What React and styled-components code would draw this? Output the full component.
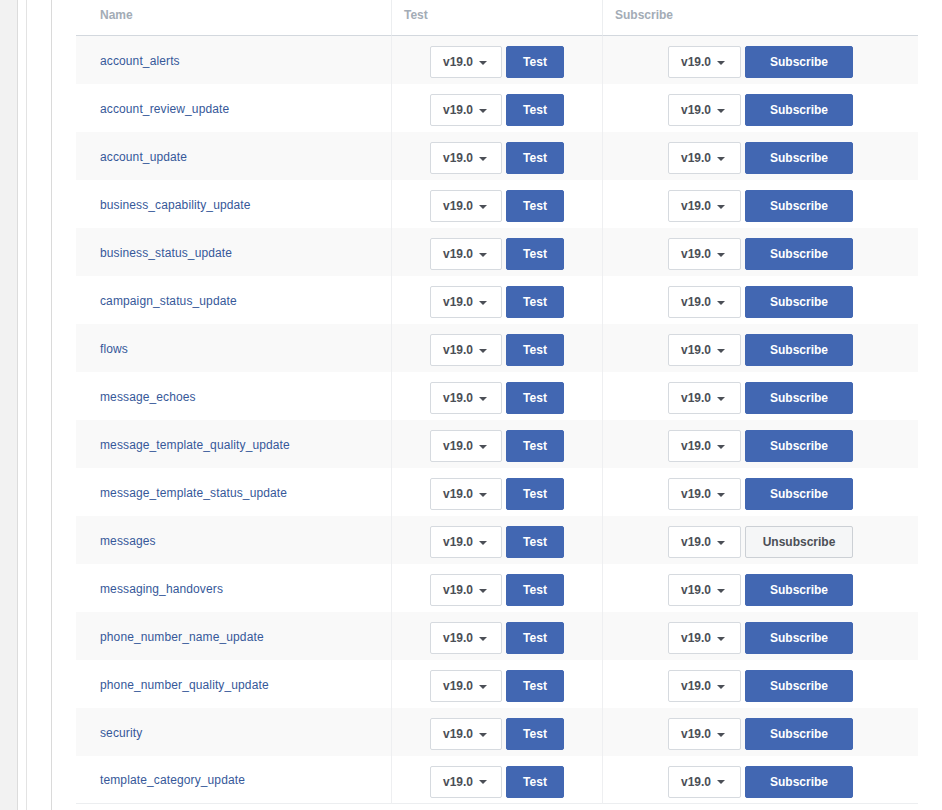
import React from 'react'
import styled, { createGlobalStyle } from 'styled-components'

const Global = createGlobalStyle`
  html, body {
    margin: 0;
    padding: 0;
    background: #fff;
    font-family: "Liberation Sans", Arial, Helvetica, sans-serif;
  }
`

const fields = [
  'account_alerts',
  'account_review_update',
  'account_update',
  'business_capability_update',
  'business_status_update',
  'campaign_status_update',
  'flows',
  'message_echoes',
  'message_template_quality_update',
  'message_template_status_update',
  'messages',
  'messaging_handovers',
  'phone_number_name_update',
  'phone_number_quality_update',
  'security',
  'template_category_update',
]

const subscribed = ['messages']

const Page = styled.div`
  display: flex;
  min-height: 810px;
`

const Sidebar = styled.div`
  width: 17px;
  flex: none;
  background: #f2f2f2;
  border-right: 1px solid #dcdcdc;
`

const Outer = styled.div`
  flex: 1;
  padding-left: 8px;
  display: flex;
`

const Inner = styled.div`
  flex: 1;
  border-left: 1px solid #e3e3e3;
  padding-left: 24px;
  display: flex;
`

const Content = styled.div`
  flex: 1;
  border-left: 1px solid #dadada;
  padding: 0 24px 0 24px;
`

const Table = styled.div`
  display: grid;
  grid-template-columns: 315px 211px 316px;
`

const HeadCell = styled.div`
  height: 36px;
  border-bottom: 1px solid #d3d8de;
  border-left: ${p => (p.$first ? 'none' : '1px solid #eceef0')};
  font-size: 12px;
  font-weight: bold;
  color: #a3acb6;
  padding-left: ${p => (p.$first ? '24px' : '12px')};
  display: flex;
  align-items: center;
  padding-bottom: 5px;
  box-sizing: border-box;
`

const Cell = styled.div`
  height: 48px;
  box-sizing: border-box;
  background: ${p => (p.$odd ? '#f9f9f9' : '#fff')};
  border-left: ${p => (p.$first ? 'none' : '1px solid #eeeff1')};
  border-bottom: ${p => (p.$last ? '1px solid #eceef0' : 'none')};
  display: flex;
  align-items: center;
  justify-content: ${p => (p.$first ? 'flex-start' : 'center')};
  padding-left: ${p => (p.$first ? '24px' : '0')};
  padding-top: 4px;
  gap: 4px;
`

const FieldName = styled.a`
  font-size: 12px;
  letter-spacing: 0.12px;
  color: #365899;
  text-decoration: none;
  cursor: pointer;
  margin-top: -3px;
`

const Select = styled.button`
  width: ${p => p.$w}px;
  height: 32px;
  box-sizing: border-box;
  border: 1px solid #d6dadf;
  border-radius: 2px;
  background: #fff;
  font-family: inherit;
  font-size: 12px;
  font-weight: bold;
  color: #4b4f56;
  display: flex;
  align-items: center;
  padding: 0 0 0 12px;
  gap: 6px;
  cursor: pointer;
`

const Caret = styled.span`
  width: 0;
  height: 0;
  border-left: 4px solid transparent;
  border-right: 4px solid transparent;
  border-top: 4px solid #4b4f56;
  margin-top: 1px;
`

const Button = styled.button`
  width: ${p => p.$w}px;
  height: 32px;
  box-sizing: border-box;
  border-radius: 2px;
  border: 1px solid ${p => (p.$light ? '#ccd0d5' : '#4267b2')};
  background: ${p => (p.$light ? '#f5f6f7' : '#4267b2')};
  color: ${p => (p.$light ? '#4b4f56' : '#fff')};
  font-family: inherit;
  font-size: 12px;
  font-weight: bold;
  padding: 0;
  cursor: pointer;
`

const Version = ({ w }) => (
  <Select $w={w}>
    v19.0
    <Caret />
  </Select>
)

const App = () => {
  return (
    <>
      <Global />
      <Page>
        <Sidebar />
        <Outer>
          <Inner>
            <Content>
              <Table>
                <HeadCell $first>Name</HeadCell>
                <HeadCell>Test</HeadCell>
                <HeadCell>Subscribe</HeadCell>
                {fields.map((f, i) => {
                  const odd = i % 2 === 0
                  const last = i === fields.length - 1
                  const on = subscribed.includes(f)
                  return (
                    <React.Fragment key={f}>
                      <Cell $first $odd={odd} $last={last}>
                        <FieldName>{f}</FieldName>
                      </Cell>
                      <Cell $odd={odd} $last={last}>
                        <Version w={72} />
                        <Button $w={58}>Test</Button>
                      </Cell>
                      <Cell $odd={odd} $last={last}>
                        <Version w={73} />
                        <Button $w={108} $light={on}>
                          {on ? 'Unsubscribe' : 'Subscribe'}
                        </Button>
                      </Cell>
                    </React.Fragment>
                  )
                })}
              </Table>
            </Content>
          </Inner>
        </Outer>
      </Page>
    </>
  )
}

export default App
